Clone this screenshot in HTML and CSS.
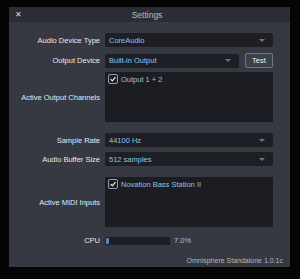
FILE: index.html
```html
<!DOCTYPE html>
<html>
<head>
<meta charset="utf-8">
<link rel="stylesheet" href="styles.css">
</head>
<body>
<div class="window">
  <div class="titlebar">
    <span class="close">✕</span>
    <span class="title">Settings</span>
  </div>
  <div class="content">
    <div class="row r1">
      <div class="label">Audio Device Type</div>
      <div class="select wide"><span>CoreAudio</span><i class="arrow"></i></div>
    </div>
    <div class="row r2">
      <div class="label">Output Device</div>
      <div class="select narrow"><span>Built-in Output</span><i class="arrow"></i></div>
      <div class="btn">Test</div>
    </div>
    <div class="row r3">
      <div class="label">Active Output Channels</div>
      <div class="list">
        <div class="item"><span class="check"><svg viewBox="0 0 10 10" width="10" height="10"><path d="M2.6 5.2 L4.3 6.9 L7.5 3.1" fill="none" stroke="#e6eef6" stroke-width="1.2"/></svg></span><span>Output 1 + 2</span></div>
      </div>
    </div>
    <div class="row r4">
      <div class="label">Sample Rate</div>
      <div class="select wide"><span>44100 Hz</span><i class="arrow"></i></div>
    </div>
    <div class="row r5">
      <div class="label">Audio Buffer Size</div>
      <div class="select wide"><span>512 samples</span><i class="arrow"></i></div>
    </div>
    <div class="row r6">
      <div class="label">Active MIDI Inputs</div>
      <div class="list">
        <div class="item"><span class="check"><svg viewBox="0 0 10 10" width="10" height="10"><path d="M2.6 5.2 L4.3 6.9 L7.5 3.1" fill="none" stroke="#e6eef6" stroke-width="1.2"/></svg></span><span>Novation Bass Station II</span></div>
      </div>
    </div>
    <div class="row r7">
      <div class="label">CPU</div>
      <div class="cpubar"><div class="cpufill"></div></div>
      <div class="cpuval">7.0%</div>
    </div>
    <div class="footer">Omnisphere Standalone 1.0.1c</div>
  </div>
</div>
</body>
</html>
```
FILE: styles.css
```css
html, body {
  margin: 0;
  padding: 0;
  background: #050505;
  width: 300px;
  height: 279px;
  overflow: hidden;
}
body {
  font-family: "Liberation Sans", Arial, sans-serif;
  font-size: 7.5px;
  color: #e6e6e8;
}
.window {
  margin: 7px 0 0 9px;
  width: 281px;
  height: 260px;
  background: #363842;
  display: flex;
  flex-direction: column;
}
.titlebar {
  height: 15px;
  background: #2b2d35;
  display: flex;
  align-items: center;
  position: relative;
  flex: none;
}
.close {
  margin-left: 6px;
  font-size: 8px;
  color: #d8d8dc;
  line-height: 1;
}
.title {
  flex: 1;
  text-align: center;
  font-size: 8.5px;
  color: #b8bac0;
  margin-right: 16px;
  margin-left: -2px;
}
.content {
  display: flex;
  flex-direction: column;
  padding: 11px 17px 0 0;
}
.row {
  display: flex;
  align-items: center;
}
.label {
  width: 91px;
  flex: none;
  text-align: right;
  margin-right: 5px;
  color: #e8e8ea;
}
.select {
  height: 14px;
  background: #1e1f25;
  border-radius: 2px;
  display: flex;
  align-items: center;
  padding-left: 4px;
  color: #8fc3ea;
  box-sizing: border-box;
  position: relative;
}
.select.wide { width: 168px; }
.select.narrow { width: 134px; }
.select span { flex: 1; }
.arrow {
  width: 0;
  height: 0;
  border-left: 3px solid transparent;
  border-right: 3px solid transparent;
  border-top: 3px solid #72747c;
  margin-right: 8px;
}
.btn {
  margin-left: 6px;
  width: 28px;
  height: 15px;
  box-sizing: border-box;
  border: 1px solid #74767e;
  border-radius: 2px;
  background: #3e4049;
  display: flex;
  align-items: center;
  justify-content: center;
  color: #f0f0f2;
}
.r2 { margin-top: 6px; }
.r3 { margin-top: 4px; }
.r4 { margin-top: 11px; }
.r5 { margin-top: 5px; }
.r6 { margin-top: 11px; }
.r7 { margin-top: 9px; }
.list {
  width: 168px;
  height: 50px;
  background: #1c1d22;
  align-self: stretch;
  box-sizing: border-box;
  padding: 2px 0 0 3px;
}
.r3 .list, .r6 .list { align-self: auto; }
.item {
  display: flex;
  align-items: center;
  color: #8fc3ea;
}
.check {
  width: 10px;
  height: 10px;
  box-sizing: border-box;
  border: 1px solid #8aa2b8;
  border-radius: 2px;
  margin-right: 3px;
  display: flex;
  align-items: center;
  justify-content: center;
}
.check svg { flex: none; }
.cpubar {
  width: 65px;
  height: 8px;
  background: #1e1f25;
  display: flex;
  padding: 1px;
  box-sizing: border-box;
}
.cpufill {
  width: 3px;
  background: #5f86b4;
  border-radius: 1px;
}
.cpuval {
  margin-left: 4px;
  color: #b8bac0;
}
.footer {
  margin-top: 12px;
  text-align: right;
  margin-right: -10px;
  color: #b4b6bc;
  font-size: 7px;
}
```
